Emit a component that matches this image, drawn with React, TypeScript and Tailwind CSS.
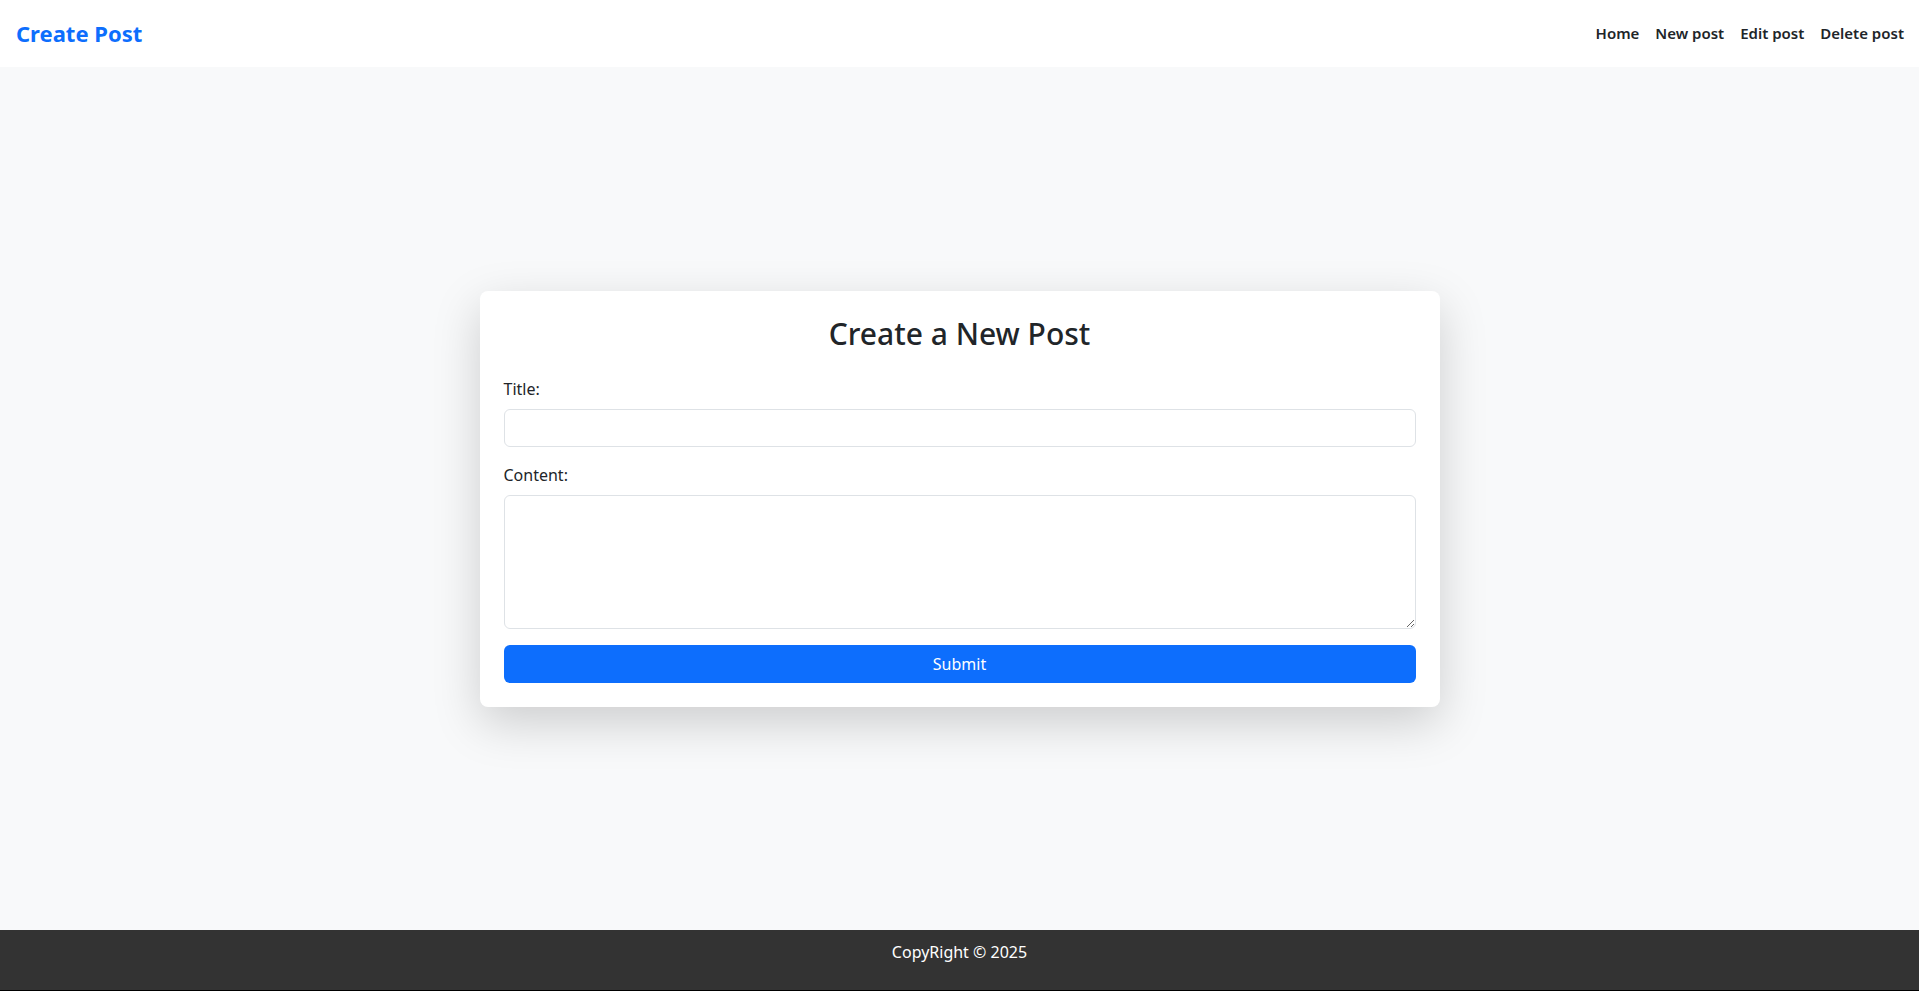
import { useState } from 'react'

const navLinks = ['Home', 'New post', 'Edit post', 'Delete post']

export default function App() {
  const [title, setTitle] = useState('')
  const [content, setContent] = useState('')

  return (
    <div className="flex h-screen flex-col bg-[#f8f9fa] font-['Noto_Sans',sans-serif] text-[#212529]">
      <header className="flex h-[67px] shrink-0 items-center justify-between bg-white pl-4 pr-[7px]">
        <a href="#" className="text-[22px] font-bold text-[#0d6efd]">
          Create Post
        </a>
        <nav className="flex items-center">
          {navLinks.map((link) => (
            <a key={link} href="#" className="px-2 text-[15px] font-semibold text-[#212529]">
              {link}
            </a>
          ))}
        </nav>
      </header>

      <main className="flex flex-1 items-center justify-center">
        <div className="w-[960px] rounded-lg bg-white p-6 shadow-[0_16px_48px_rgba(0,0,0,0.175)]">
          <h2 className="mb-6 text-center text-[30px] font-medium leading-[38px]">Create a New Post</h2>
          <form onSubmit={(e) => e.preventDefault()}>
            <div className="mb-4">
              <label className="mb-2 block text-base leading-6">Title:</label>
              <input
                value={title}
                onChange={(e) => setTitle(e.target.value)}
                className="block h-[38px] w-full rounded-md border border-[#dee2e6] px-3 outline-none"
              />
            </div>
            <div className="mb-4">
              <label className="mb-2 block text-base leading-6">Content:</label>
              <textarea
                rows={5}
                value={content}
                onChange={(e) => setContent(e.target.value)}
                className="block h-[134px] w-full rounded-md border border-[#dee2e6] px-3 py-1.5 outline-none"
              />
            </div>
            <button
              type="submit"
              className="block h-[38px] w-full rounded-md bg-[#0d6efd] text-base text-white"
            >
              Submit
            </button>
          </form>
        </div>
      </main>

      <footer className="h-[61px] shrink-0 border-b border-black bg-[#333333] pt-[10px] text-center text-base leading-6 text-white">
        CopyRight © 2025
      </footer>
    </div>
  )
}
